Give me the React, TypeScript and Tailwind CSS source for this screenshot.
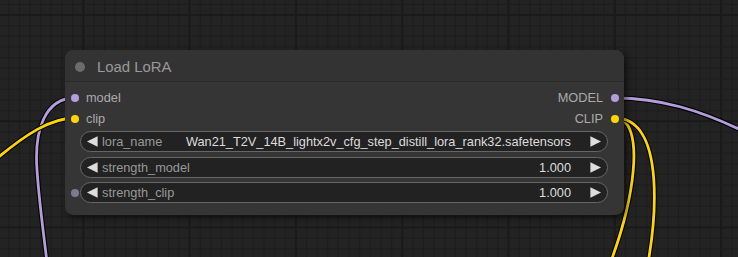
import React from "react";

const MINOR = 10.63;
const MAJOR_X0 = 83.3;
const MAJOR_Y0 = 15;

function Grid() {
  const xs: number[] = [];
  const ys: number[] = [];
  for (let k = -8; k < 64; k++) xs.push(MAJOR_X0 + k * MINOR);
  for (let k = -2; k < 24; k++) ys.push(MAJOR_Y0 + k * MINOR);
  return (
    <g>
      {xs.map((x, i) => {
        const major = Math.abs((i - 8) % 10) === 0;
        return (
          <line
            key={"x" + i}
            x1={x}
            x2={x}
            y1={0}
            y2={257}
            stroke={major ? "#1a1a1a" : "#1e1e1e"}
            strokeWidth={major ? 2 : 1}
          />
        );
      })}
      {ys.map((y, i) => {
        const major = Math.abs((i - 2) % 10) === 0;
        return (
          <line
            key={"y" + i}
            x1={0}
            x2={738}
            y1={y}
            y2={y}
            stroke={major ? "#1a1a1a" : "#1e1e1e"}
            strokeWidth={major ? 2 : 1}
          />
        );
      })}
    </g>
  );
}

function Wire({ d, color }: { d: string; color: string }) {
  return (
    <g fill="none" strokeLinecap="round">
      <path d={d} stroke="#000" strokeWidth={5} />
      <path d={d} stroke={color} strokeWidth={2.8} />
    </g>
  );
}

function ArrowLeft() {
  return (
    <svg width="11" height="11" viewBox="0 0 11 11" className="shrink-0">
      <polygon points="10.6,0.3 0,5.5 10.6,10.7" fill="#dddddd" />
    </svg>
  );
}

function ArrowRight() {
  return (
    <svg width="11" height="11" viewBox="0 0 11 11" className="shrink-0">
      <polygon points="0.4,0.3 11,5.5 0.4,10.7" fill="#dddddd" />
    </svg>
  );
}

function Widget({
  label,
  value,
  slot,
}: {
  label: string;
  value: string;
  slot?: boolean;
}) {
  return (
    <div className="flex items-center pl-[6px] pr-[16px] h-[21px]">
      <div
        className={
          "w-[8px] h-[8px] rounded-full shrink-0 " +
          (slot ? "bg-[#7b7b8c]" : "bg-transparent")
        }
      />
      <div className="ml-[1px] flex-1 h-[21px] rounded-full border border-[#666666] bg-[#222222] flex items-center pl-[6px] pr-[6px] min-w-0">
        <ArrowLeft />
        <span className="ml-[4px] text-[#999999] whitespace-nowrap leading-[19px]">{label}</span>
        <span className="flex-1 text-right text-[#dddddd] whitespace-nowrap leading-[19px] mr-[19px]">
          {value}
        </span>
        <ArrowRight />
      </div>
    </div>
  );
}

export default function App() {
  return (
    <div
      className="relative w-[738px] h-[257px] overflow-hidden bg-[#232323]"
      style={{ fontFamily: '"Liberation Sans", Arial, sans-serif' }}
    >
      <svg className="absolute inset-0" width="738" height="257">
        <Grid />
        <Wire d="M75,98 C45,98 34,130 37,170 C39,200 43,230 47,262" color="#b39ddb" />
        <Wire d="M75,118 C50,118 25,135 -5,160" color="#ffd500" />
        <Wire d="M615,98 C660,98 700,110 745,132" color="#b39ddb" />
        <Wire d="M615,118 C645,118 640,200 595,300" color="#ffd500" />
        <Wire d="M615,118 C665,118 660,220 640,300" color="#ffd500" />
      </svg>

      <div className="absolute left-[65px] top-[50px] w-[559px] h-[165px] rounded-[8.5px] bg-[#353535] shadow-[3px_3px_6px_rgba(0,0,0,0.5)] flex flex-col text-[12.75px]">
        <div className="h-[32px] shrink-0 flex items-center pl-[10px] rounded-t-[8.5px] bg-[#333333] border-b border-[#2a2a2a]">
          <div className="w-[10px] h-[10px] rounded-full bg-[#6b6b6b] mt-[2px]" />
          <span className="ml-[12px] text-[14.9px] text-[#999999] leading-[18px] mt-[2px]">Load LoRA</span>
        </div>
        <div className="pt-[5px] flex flex-col leading-[21px]">
          <div className="h-[21px] flex items-center justify-between pl-[6px] pr-[5px]">
            <div className="flex items-center">
              <div className="w-[8px] h-[8px] rounded-full bg-[#b39ddb]" />
              <span className="ml-[7px] text-[#aaaaaa]">model</span>
            </div>
            <div className="flex items-center">
              <span className="mr-[8px] text-[#aaaaaa]">MODEL</span>
              <div className="w-[8px] h-[8px] rounded-full bg-[#b39ddb]" />
            </div>
          </div>
          <div className="h-[21px] flex items-center justify-between pl-[6px] pr-[5px]">
            <div className="flex items-center">
              <div className="w-[8px] h-[8px] rounded-full bg-[#ffd500]" />
              <span className="ml-[7px] text-[#aaaaaa]">clip</span>
            </div>
            <div className="flex items-center">
              <span className="mr-[8px] text-[#aaaaaa]">CLIP</span>
              <div className="w-[8px] h-[8px] rounded-full bg-[#ffd500]" />
            </div>
          </div>
        </div>
        <div className="mt-[2px] flex flex-col gap-[4.5px]">
          <Widget
            label="lora_name"
            value="Wan21_T2V_14B_lightx2v_cfg_step_distill_lora_rank32.safetensors"
          />
          <Widget label="strength_model" value="1.000" />
          <Widget label="strength_clip" value="1.000" slot />
        </div>
      </div>
    </div>
  );
}
